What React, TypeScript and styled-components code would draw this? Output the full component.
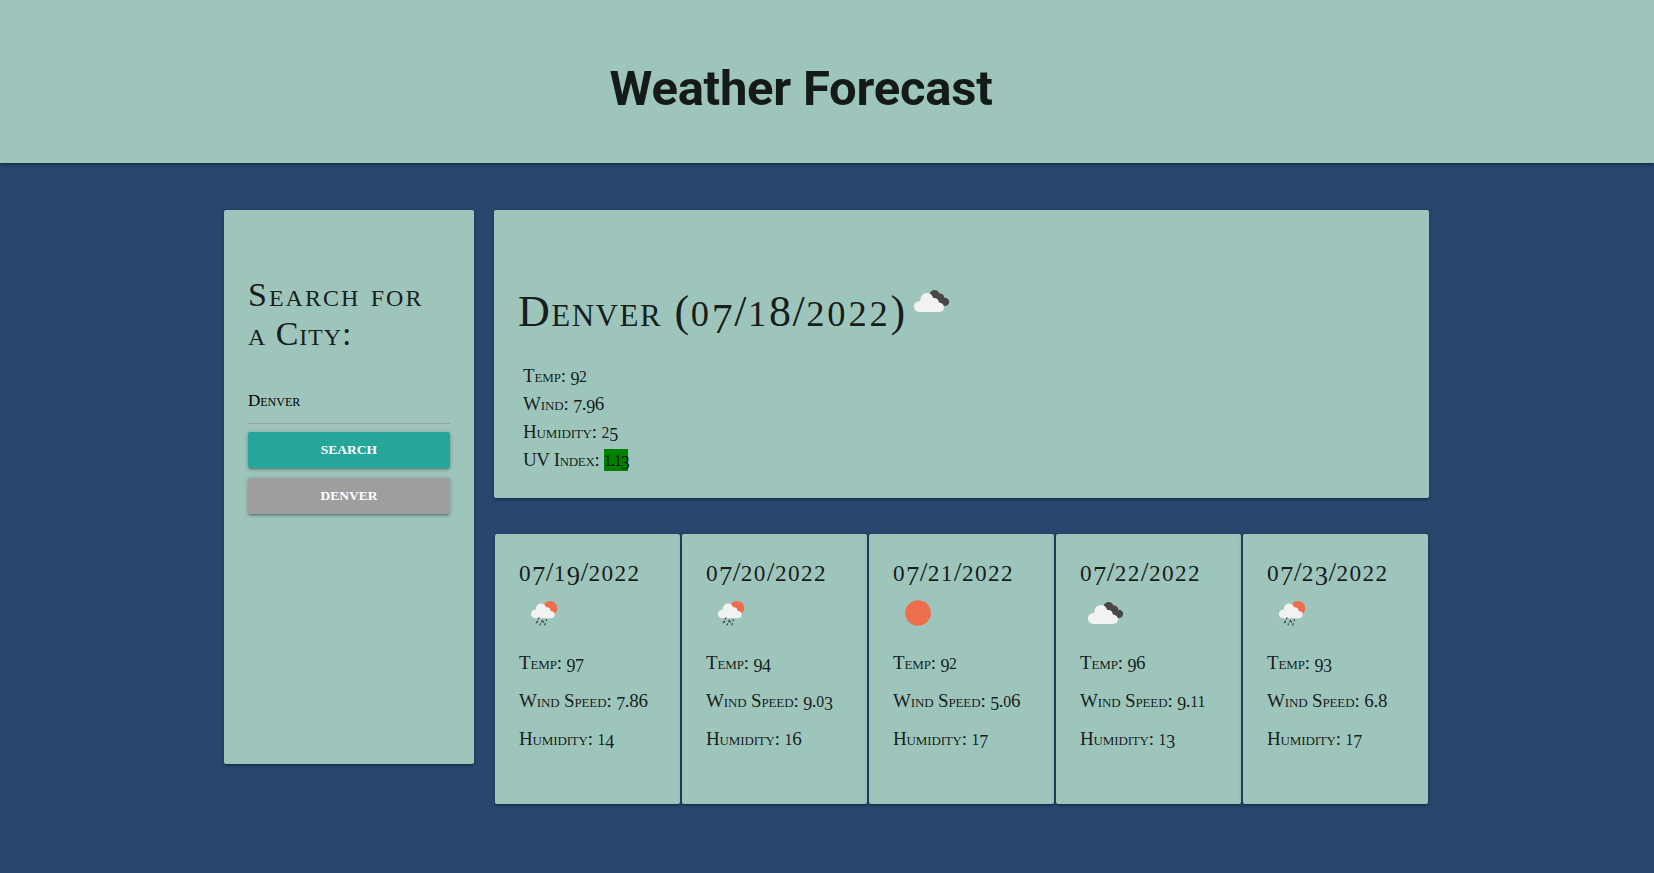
import React from "react";
import styled, { createGlobalStyle } from "styled-components";

const GlobalStyle = createGlobalStyle`
  * { box-sizing: border-box; }
  body {
    margin: 0;
    background: #27476e;
    color: rgba(0, 0, 0, 0.87);
    font-family: "Liberation Serif", serif;
    font-variant-caps: small-caps;
  }
`;

const depth =
  "0 2px 2px 0 rgba(0,0,0,.14), 0 3px 1px -2px rgba(0,0,0,.12), 0 1px 5px 0 rgba(0,0,0,.2)";

/* Old-style figures: 0-2 sit at small-cap height, 3 4 5 7 9 descend. */
const Low = styled.span`
  font-size: 0.83em;
  line-height: 0;
`;

const Descending = styled.span`
  font-size: 0.95em;
  vertical-align: -0.16em;
  line-height: 0;
`;

const Page = styled.div`
  min-height: 873px;
`;

const Header = styled.header`
  height: 163px;
  padding: 58px 52px 0 0;
  background: #9dc5bb;
  box-shadow: ${depth};
  text-align: center;
`;

const Title = styled.h1`
  margin: 0;
  font: 700 49px/62px Roboto, sans-serif;
  font-variant-caps: normal;
  letter-spacing: -0.25px;
`;

const Layout = styled.main`
  display: grid;
  grid-template-columns: 250px 935px;
  column-gap: 20px;
  align-items: start;
  padding: 47px 0 0 224px;
`;

const Card = styled.section`
  background: #9dc5bb;
  border-radius: 2px;
  box-shadow: ${depth};
`;

const SearchCard = styled(Card)`
  height: 554px;
  padding: 65px 24px 0;
`;

const SearchHeading = styled.h2`
  margin: 0 -10px 25px 0;
  font-size: 34px;
  font-weight: 400;
  line-height: 39px;
  letter-spacing: 0.9px;

  &::first-line {
    letter-spacing: 2px;
  }
`;

const CityInput = styled.input`
  display: block;
  width: 100%;
  height: 46px;
  padding: 0;
  border: 0;
  border-bottom: 1px solid #9e9e9e;
  outline: 0;
  background: transparent;
  color: #000;
  font: 400 17px "Liberation Serif", serif;
  font-variant-caps: small-caps;
`;

const Button = styled.button<{ $tone: string }>`
  display: block;
  width: 100%;
  height: 36px;
  margin-top: ${(p) => (p.$tone === "#26a69a" ? "8px" : "10px")};
  padding: 0;
  border: 0;
  border-radius: 2px;
  background: ${(p) => p.$tone};
  box-shadow: ${depth};
  color: #fff;
  font: 700 13.5px/36px "Liberation Serif", serif;
  text-transform: uppercase;
`;

const Results = styled.div`
  display: flex;
  flex-direction: column;
  gap: 36px;
`;

const CurrentCard = styled(Card)`
  height: 288px;
  padding: 66px 24px 0;
`;

const CurrentHeading = styled.h2`
  display: flex;
  align-items: baseline;
  height: 60px;
  margin: 0 0 26px;
  font-size: 44px;
  font-weight: 400;
  line-height: 50px;
  white-space: nowrap;
`;

const HeadingText = styled.span`
  width: 388px;
  letter-spacing: 1.5px;

  ${Low} {
    letter-spacing: 2.8px;
  }
`;

const Reading = styled.div<{ $line: number }>`
  font-size: 19px;
  line-height: ${(p) => p.$line}px;
  letter-spacing: -0.15px;
  white-space: nowrap;

  ${Descending} {
    letter-spacing: -0.5px;
  }
`;

const Readings = styled.div`
  padding-left: 5px;
`;

const UvLabel = styled.span`
  letter-spacing: -0.35px;
`;

const UvBadge = styled.span`
  display: inline-block;
  width: 24px;
  height: 22px;
  line-height: 22px;
  letter-spacing: -1.2px;
  background: green;
`;

const Days = styled.div`
  display: grid;
  grid-template-columns: repeat(5, 185px);
  column-gap: 2px;
  padding-left: 1px;
`;

const DayCard = styled(Card)`
  height: 270px;
  padding: 23px 0 0 24px;
`;

const DayDate = styled.h3`
  margin: 0 0 1px;
  font-size: 28px;
  font-weight: 400;
  line-height: 30px;
  letter-spacing: 0.3px;
  white-space: nowrap;

  ${Low} {
    letter-spacing: 1.4px;
  }
`;

const DayReadings = styled.div`
  margin-top: 6px;
`;

const IconSvg = styled.svg`
  display: block;
  flex: none;
`;

function Figures({ text }: { text: string }) {
  return (
    <>
      {(text.match(/[012]+|[34579]+|[^0-57 9]+|\s+/g) ?? []).map((run, i) => {
        if (/^[012]/.test(run)) return <Low key={i}>{run}</Low>;
        if (/^[34579]/.test(run)) return <Descending key={i}>{run}</Descending>;
        return run;
      })}
    </>
  );
}

type Sky = "rain" | "sun" | "clouds";

function WeatherIcon({ sky }: { sky: Sky }) {
  return (
    <IconSvg width="50" height="50" viewBox="0 0 50 50">
      {sky === "sun" && <circle cx="25" cy="25" r="12.8" fill="#ec6e4c" />}
      {sky === "clouds" && (
        <>
          <path
            d="M23.2 19C24 15.8 26 14 28.6 14c2.5 0 4.2 1.5 5 3.6 2.7-.3 4.6 1.5 4.7 4.1 2.8-.2 4.9 1.5 4.9 4.1 0 2.5-1.8 4.2-4.3 4.2-1.4 0-2.6-.6-3.5-1.6z"
            fill="#484848"
          />
          <path
            d="M13.5 36C10.300 36 8 33.700 8 30.600c0-3.300 2.600-5.600 6.300-5.500-.1-4.600 2.500-8 6.600-8 3.200 0 5.500 1.900 6.300 5 3.200-.6 5.500 1.500 5.700 4.500 3.200.2 5.100 2.100 5.100 4.700 0 2.800-2 4.700-4.900 4.700z"
            fill="#f2f2f2"
          />
        </>
      )}
      {sky === "rain" && (
        <>
          <circle cx="31" cy="20.200" r="7.300" fill="#ec6e4c" />
          <path
            d="M25.500 18.500c1.600 1 2.200 1.800 2.700 2.700 2.700 0 4.600 1.600 4.900 4.100 1.400.1 2.700.8 3.400 1.700l-7 2-6-7z"
            fill="#e6492d"
          />
          <path
            d="M16.500 30.200c-2.700 0-4.600-1.800-4.600-4.300 0-2.700 2-4.500 5-4.500-.1-3.600 2.100-6 5.200-6 2.500 0 4.400 1.500 4.900 3.900 2.600-.5 4.600 1.100 4.700 3.600 2.600.1 4.200 1.500 4.200 3.700 0 2.200-1.500 3.600-3.800 3.600z"
            fill="#f2f2f2"
          />
          <path
            d="M19.900 29.900l-.4.900M18.500 33.200l-.6 1.300M23.400 32.300l-.7 1.500M27.500 31.800l-.4.700M21.500 35.900l-.4.900M24.500 33.500l-.3.700M26.300 35.500l-.6 1.400M17.700 34l-.3.700"
            stroke="#484848"
            strokeWidth="1.300"
            strokeLinecap="round"
          />
        </>
      )}
    </IconSvg>
  );
}

const days: { date: string; sky: Sky; temp: string; wind: string; humidity: string }[] = [
  { date: "07/19/2022", sky: "rain", temp: "97", wind: "7.86", humidity: "14" },
  { date: "07/20/2022", sky: "rain", temp: "94", wind: "9.03", humidity: "16" },
  { date: "07/21/2022", sky: "sun", temp: "92", wind: "5.06", humidity: "17" },
  { date: "07/22/2022", sky: "clouds", temp: "96", wind: "9.11", humidity: "13" },
  { date: "07/23/2022", sky: "rain", temp: "93", wind: "6.8", humidity: "17" },
];

export default function App() {
  return (
    <Page>
      <GlobalStyle />
      <Header>
        <Title>Weather Forecast</Title>
      </Header>
      <Layout>
        <SearchCard>
          <SearchHeading>
            Search for
            <br />a City:
          </SearchHeading>
          <CityInput defaultValue="Denver" aria-label="City" />
          <Button $tone="#26a69a">Search</Button>
          <Button $tone="#9e9e9e">Denver</Button>
        </SearchCard>
        <Results>
          <CurrentCard>
            <CurrentHeading>
              <HeadingText>
                <Figures text="Denver (07/18/2022)" />
              </HeadingText>
              <WeatherIcon sky="clouds" />
            </CurrentHeading>
            <Readings>
              <Reading $line={28}>
                <Figures text="Temp: 92" />
              </Reading>
              <Reading $line={28}>
                <Figures text="Wind: 7.96" />
              </Reading>
              <Reading $line={28}>
                <Figures text="Humidity: 25" />
              </Reading>
              <Reading $line={28}>
                <UvLabel>UV Index: </UvLabel>
                <UvBadge>
                  <Figures text="1.13" />
                </UvBadge>
              </Reading>
            </Readings>
          </CurrentCard>
          <Days>
            {days.map((day) => (
              <DayCard key={day.date}>
                <DayDate>
                  <Figures text={day.date} />
                </DayDate>
                <WeatherIcon sky={day.sky} />
                <DayReadings>
                  <Reading $line={38}>
                    <Figures text={`Temp: ${day.temp}`} />
                  </Reading>
                  <Reading $line={38}>
                    <Figures text={`Wind Speed: ${day.wind}`} />
                  </Reading>
                  <Reading $line={38}>
                    <Figures text={`Humidity: ${day.humidity}`} />
                  </Reading>
                </DayReadings>
              </DayCard>
            ))}
          </Days>
        </Results>
      </Layout>
    </Page>
  );
}
